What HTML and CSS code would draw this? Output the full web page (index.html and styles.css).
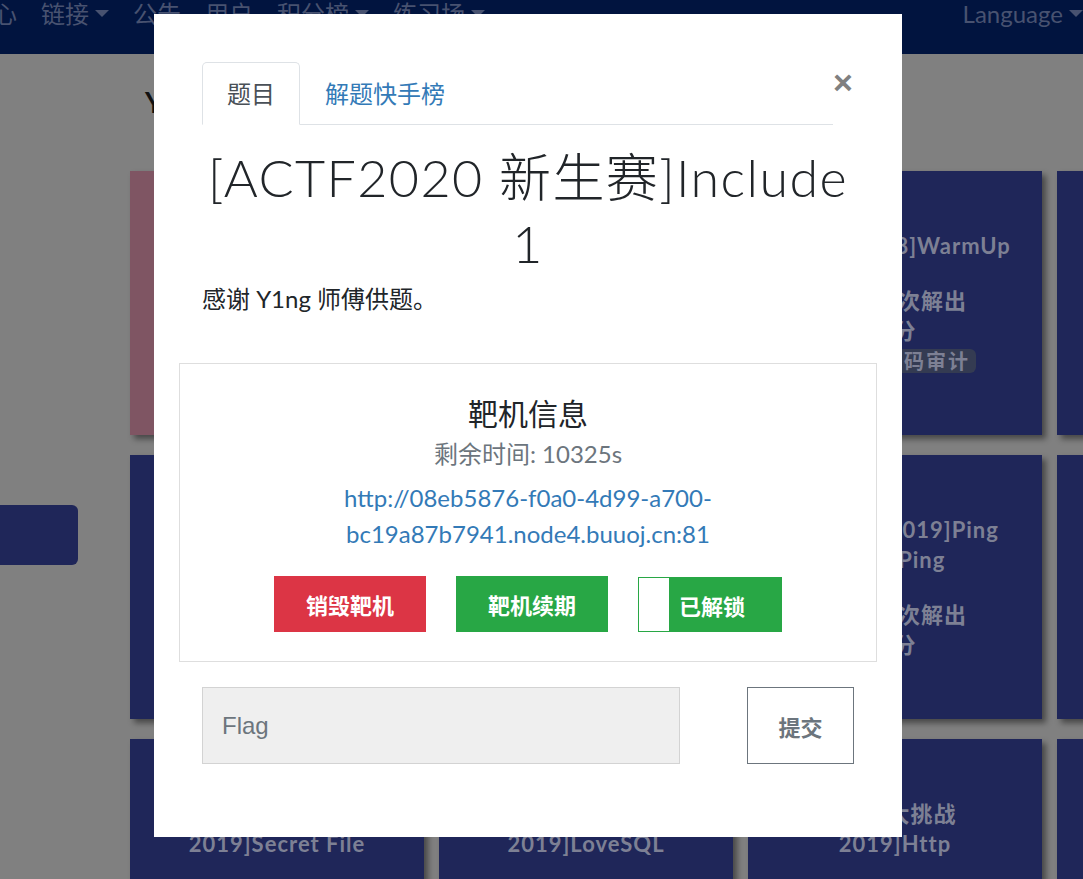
FILE: index.html
```html
<!DOCTYPE html>
<html lang="zh">
<head>
<meta charset="utf-8">
<title>BUUCTF - 题目</title>
<link rel="stylesheet" href="styles.css">
</head>
<body>
<nav class="navbar">
  <ul class="nav-list nav-left">
    <li class="nav-item">心</li>
    <li class="nav-item dropdown">链接</li>
    <li class="nav-item">公告</li>
    <li class="nav-item">用户</li>
    <li class="nav-item dropdown">积分榜</li>
    <li class="nav-item dropdown">练习场</li>
  </ul>
  <ul class="nav-list nav-right">
    <li class="nav-item dropdown">Language</li>
  </ul>
</nav>

<div class="page">
  <aside class="sidebar">
    <div class="side-btn"></div>
  </aside>
  <main class="main">
    <h2 class="page-title">Your Challenges</h2>
    <div class="grid">
      <div class="card solved">
        <p class="card-title">[极客大挑战<br>2019]EasySQL</p>
        <p class="card-stats">48213 次解出<br>1 分</p>
      </div>
      <div class="card">
        <p class="card-title">[极客大挑战<br>2019]Havefun</p>
        <p class="card-stats">39870 次解出<br>1 分</p>
      </div>
      <div class="card">
        <p class="card-title">[HCTF 2018]WarmUp</p>
        <p class="card-stats">31278 次解出<br>1 分</p>
        <div class="tags"><span class="tag">PHP</span><span class="tag">代码审计</span></div>
      </div>
      <div class="card">
        <p class="card-title">[ACTF2020<br>新生赛]Include</p>
        <p class="card-stats">30112 次解出<br>1 分</p>
      </div>

      <div class="card">
        <p class="card-title">[强网杯 2019]<br>随便注</p>
        <p class="card-stats">24981 次解出<br>1 分</p>
      </div>
      <div class="card">
        <p class="card-title">[SUCTF<br>2019]EasySQL</p>
        <p class="card-stats">19874 次解出<br>1 分</p>
      </div>
      <div class="card">
        <p class="card-title">[GXYCTF2019]Ping<br>Ping Ping</p>
        <p class="card-stats">21437 次解出<br>1 分</p>
      </div>
      <div class="card">
        <p class="card-title">[极客大挑战<br>2019]Knife</p>
        <p class="card-stats">20011 次解出<br>1 分</p>
      </div>

      <div class="card">
        <p class="card-title">[极客大挑战<br>2019]Secret File</p>
      </div>
      <div class="card">
        <p class="card-title">[极客大挑战<br>2019]LoveSQL</p>
      </div>
      <div class="card">
        <p class="card-title">[极客大挑战<br>2019]Http</p>
      </div>
      <div class="card">
        <p class="card-title">[ACTF2020<br>新生赛]Exec</p>
      </div>
    </div>
  </main>
</div>

<div class="modal">
  <button class="close" type="button">×</button>
  <ul class="tabs">
    <li class="tab active">题目</li>
    <li class="tab">解题快手榜</li>
  </ul>
  <h1 class="chal-title">[ACTF2020 新生赛]Include 1</h1>
  <p class="desc">感谢 Y1ng 师傅供题。</p>
  <div class="instance">
    <h3 class="instance-title">靶机信息</h3>
    <p class="remain">剩余时间: 10325s</p>
    <a class="url" href="#">http://08eb5876-f0a0-4d99-a700-bc19a87b7941.node4.buuoj.cn:81</a>
    <div class="actions">
      <button class="btn btn-danger" type="button">销毁靶机</button>
      <button class="btn btn-success" type="button">靶机续期</button>
      <button class="btn btn-toggle" type="button"><span class="toggle-box"></span><span class="toggle-text">已解锁</span></button>
    </div>
  </div>
  <div class="flag-row">
    <input class="flag-input" type="text" placeholder="Flag">
    <button class="submit" type="button">提交</button>
  </div>
</div>
</body>
</html>
```

FILE: styles.css
```css
* { box-sizing: border-box; }

html, body {
  margin: 0;
  padding: 0;
}

body {
  width: 1083px;
  height: 879px;
  overflow: hidden;
  background: #808080;
  font-family: Lato, "Noto Sans CJK SC", sans-serif;
  position: relative;
}

/* ---------- navbar ---------- */
.navbar {
  height: 54px;
  background: #01143f;
  display: flex;
  justify-content: space-between;
  align-items: flex-start;
  overflow: hidden;
}

.nav-list {
  list-style: none;
  margin: 0;
  padding: 0;
  display: flex;
}

.nav-left { margin-left: -19px; }
.nav-right { margin-right: -12px; }

.nav-item {
  font-size: 24px;
  line-height: 28px;
  color: #485270;
  padding: 0 12px;
  white-space: nowrap;
}

.dropdown::after {
  content: "";
  display: inline-block;
  margin-left: 6px;
  vertical-align: 0.255em;
  border-top: 7px solid;
  border-right: 7px solid transparent;
  border-left: 7px solid transparent;
}

/* ---------- page behind ---------- */
.page {
  display: flex;
}

.sidebar {
  width: 130px;
  flex: none;
  padding-top: 451px;
}

.side-btn {
  width: 78px;
  height: 60px;
  background: #1f2659;
  border-radius: 0 6px 6px 0;
}

.main {
  flex: 1;
  padding-top: 31px;
}

.page-title {
  margin: 0 0 52px 15px;
  font-size: 28px;
  line-height: 34px;
  font-weight: 700;
  color: #111;
  white-space: nowrap;
}

.grid {
  display: grid;
  grid-template-columns: repeat(4, 294px);
  column-gap: 15px;
  row-gap: 20px;
}

.card {
  height: 264px;
  background: #1f2659;
  box-shadow: 4px 4px 6px rgba(0, 0, 0, 0.45);
  padding-top: 60px;
  text-align: center;
  color: #7d8094;
  font-weight: 700;
  font-size: 22px;
  letter-spacing: 1px;
  line-height: 30px;
  white-space: nowrap;
}

.card.solved { background: #7f5563; }

.card-title { margin: 0; }

.card-stats { margin: 25px 0 0; }

.tags {
  margin-top: 3px;
  display: flex;
  justify-content: center;
  gap: 4px;
}

.tag {
  display: inline-block;
  background: #343b52;
  border-radius: 6px;
  padding: 0 6px;
  font-size: 20px;
  line-height: 24px;
  letter-spacing: 2px;
}

/* ---------- modal ---------- */
.modal {
  position: absolute;
  left: 154px;
  top: 14px;
  width: 748px;
  height: 823px;
  background: #fff;
  padding: 48px 48px 0;
}

.close {
  position: absolute;
  left: 674px;
  top: 53px;
  width: 30px;
  height: 30px;
  padding: 0;
  border: 0;
  background: none;
  font-family: "Liberation Sans", Arial, sans-serif;
  font-size: 34px;
  font-weight: 700;
  line-height: 30px;
  color: #808080;
}

.tabs {
  list-style: none;
  margin: 0 21px 0 0;
  padding: 0;
  display: flex;
  border-bottom: 1px solid #dee2e6;
}

.tab {
  font-size: 24px;
  line-height: 36px;
  padding: 13px 24px 12px;
  border: 1px solid transparent;
  border-radius: 5px 5px 0 0;
  margin-bottom: -1px;
  color: #337ab7;
}

.tab.active {
  color: #495057;
  background: #fff;
  border-color: #dee2e6 #dee2e6 #fff;
}

.chal-title {
  margin: 19px 0 0;
  font-size: 52px;
  line-height: 66px;
  font-weight: 300;
  letter-spacing: 1.4px;
  text-align: center;
  color: #212529;
}

.desc {
  margin: 5px 0 0;
  font-size: 24px;
  line-height: 36px;
  color: #212529;
}

.instance {
  margin: 46px -23px 0;
  border: 1px solid #dedede;
  padding: 29px 0;
  text-align: center;
}

.instance-title {
  margin: 0;
  font-size: 30px;
  line-height: 40px;
  font-weight: 400;
  color: #212529;
}

.remain {
  margin: 3px 0 0;
  font-size: 24px;
  line-height: 36px;
  color: #6c757d;
}

.url {
  display: block;
  margin: 8px auto 0;
  width: 600px;
  font-size: 24px;
  line-height: 36px;
  color: #337ab7;
  text-decoration: none;
}

.actions {
  margin-top: 24px;
  display: flex;
  justify-content: center;
  gap: 30px;
}

.btn {
  width: 152px;
  height: 56px;
  border: 0;
  padding: 0;
  color: #fff;
  font-family: "Noto Sans CJK SC", sans-serif;
  font-size: 22px;
  font-weight: 700;
}

.btn-danger { background: #dc3545; }
.btn-success { background: #28a745; }

.btn-toggle {
  width: 144px;
  height: 55px;
  margin-top: 1px;
  background: #28a745;
  border: 1px solid #28a745;
  display: flex;
  align-items: stretch;
}

.toggle-box {
  width: 30px;
  background: #fff;
}

.toggle-text {
  padding-left: 10px;
  display: flex;
  align-items: center;
}

.flag-row {
  margin-top: 25px;
  display: flex;
  justify-content: space-between;
}

.flag-input {
  width: 478px;
  height: 77px;
  background: #efefef;
  border: 1px solid #d3d3d3;
  padding: 0 19px;
  font-family: "Liberation Sans", Arial, sans-serif;
  font-size: 24px;
  color: #495057;
  outline: none;
}

.flag-input::placeholder { color: #6c757d; }

.submit {
  width: 107px;
  height: 77px;
  background: #fff;
  border: 1px solid #6c757d;
  color: #6c757d;
  font-family: "Noto Sans CJK SC", sans-serif;
  font-size: 22px;
  font-weight: 700;
}
```
